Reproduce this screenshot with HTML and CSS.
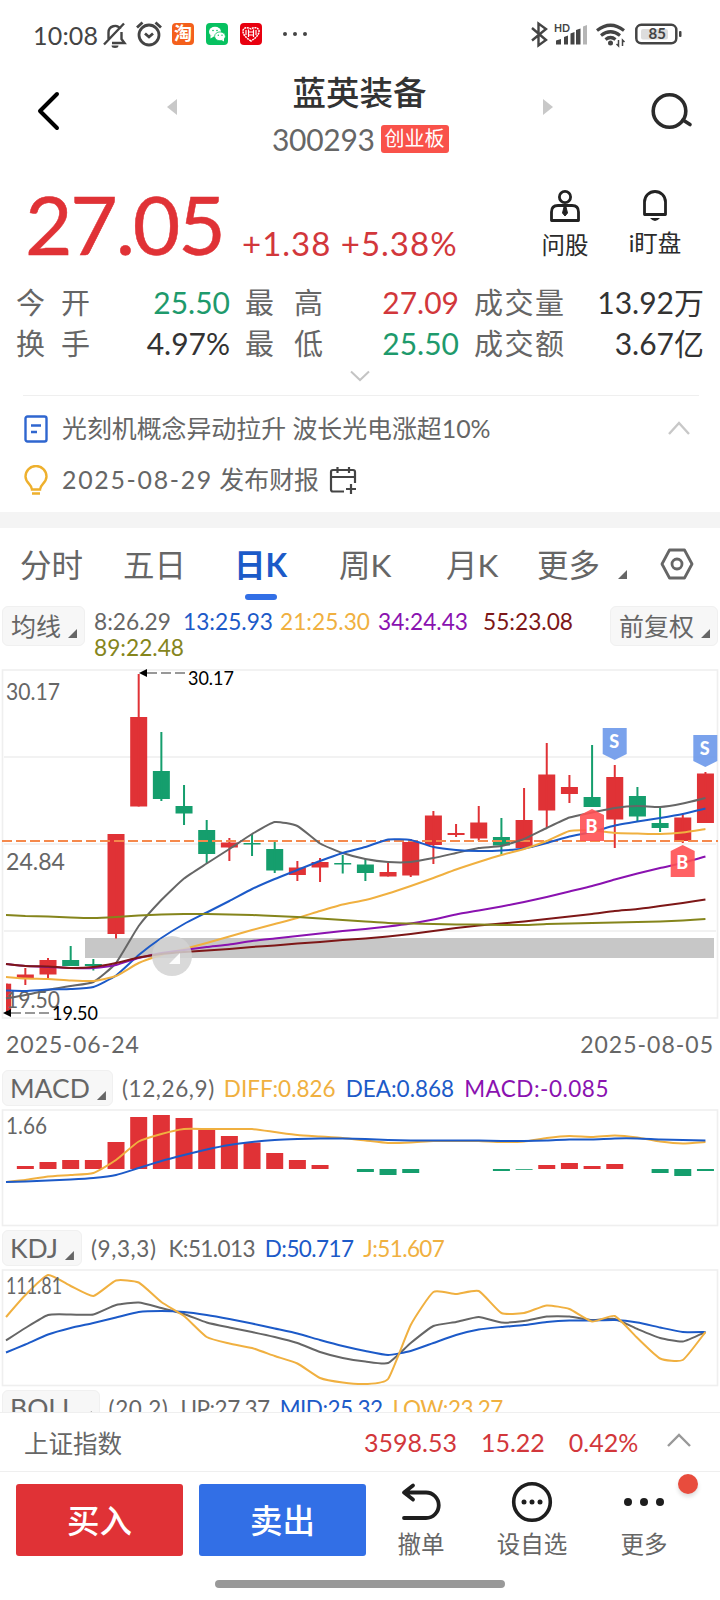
FILE: index.html
```
<!DOCTYPE html>
<html lang="zh-CN">
    <head>
        <meta charset="utf-8">
        <title>蓝英装备 300293</title>
        <link rel="stylesheet" href="styles.css">
    </head>
    <body>
        <div class="status">
            <span class="time">10:08</span>
            <svg class="bell-off" width="24" height="26" viewBox="0 0 24 26" fill="none" stroke="#444" stroke-width="2.4">
                <path d="M5.500 17V10.500a6.500 6.500 0 0 1 12-3.500M18.500 10v7l3 4H9M1 22.500 21 1.500"/>
                <path d="M8.500 23.500h7a3.500 2.500 0 0 1-7 0z" fill="#444" stroke="none"/>
            </svg>
            <svg class="alarm" width="26" height="26" viewBox="0 0 26 26" fill="none" stroke="#444" stroke-width="2.800">
                <circle cx="13" cy="14" r="10"/>
                <path d="M9 12.500l4 3.500 4-3.500M1 6.500 6.500 1.500M25 6.500 19.500 1.500"/>
            </svg>
            <span class="app taobao">淘</span>
            <span class="app wechat">
                <svg width="22" height="22" viewBox="0 0 22 22">
                    <ellipse cx="9" cy="8.800" rx="6" ry="5" fill="#fff"/>
                    <path d="M4.500 12l0 3.500 3.500-2z" fill="#fff"/>
                    <ellipse cx="14" cy="13.300" rx="5.400" ry="4.400" fill="#fff" stroke="#07c160" stroke-width=".8"/>
                    <path d="M15.500 17l2.500 1.500v-3z" fill="#fff"/>
                    <g fill="#07c160"><circle cx="7" cy="7.500" r=".8"/><circle cx="11" cy="7.500" r=".8"/><circle cx="12.300" cy="12.300" r=".7"/><circle cx="16" cy="12.300" r=".7"/></g>
                </svg>
            </span>
            <span class="app huawei">
                <svg width="22" height="22" viewBox="0 0 22 22" fill="none" stroke="#fff" stroke-width="1.500">
                    <path d="M11 18C6 15 2.500 11 3 7.500 4 4 8 4 11 6c3-2 7-2 8 1.500C19.500 11 16 15 11 18z" stroke-dasharray="2 .7"/>
                    <path d="M6 7v5M8.500 6.500v7.500M13.500 6.500v7.500M16 7v5M9 9h4M9 12h4" stroke-width="1.200"/>
                </svg>
            </span>
            <svg class="dots" width="26" height="6" fill="#444"><circle cx="3" cy="3" r="2"/><circle cx="13" cy="3" r="2"/><circle cx="23" cy="3" r="2"/></svg>
            <svg class="signals" width="154" height="28" viewBox="530 20 154 28">
                <path d="M532 28l14 12-7.500 5.500V23.500L546 29l-14 11.500" fill="none" stroke="#444" stroke-width="2.400"/>
                <text x="554" y="31.500" class="hd">HD</text>
                <g fill="#444">
                    <path d="M556 40.500l5-1.500v5.500h-5zM564 37l4-1.500v9h-4zM570.500 33.500l4-1.500v12.500h-4zM576 30l4.500-1.500v16H576z"/>
                    <path d="M583 26.500l4-1.500v19.500h-4z" fill="#b5b5b5"/>
                </g>
                <g fill="none" stroke="#444" stroke-width="3.200">
                    <path d="M597 30.500q13.500-10.500 27 0M601 35.500q9.500-7.500 19 0M605.500 39.500q5-4 10 0"/>
                </g>
                <circle cx="610.500" cy="43" r="2.500" fill="#444"/>
                <path d="M618.500 40v6l-2-2M622.500 46v-6l2 2" fill="none" stroke="#444" stroke-width="1.500"/>
                <rect x="636.300" y="24.800" width="40" height="18.500" rx="5" fill="none" stroke="#444" stroke-width="2.500"/>
                <rect x="641" y="29" width="27" height="10.500" rx="2" fill="#ddd"/>
                <rect x="679" y="31" width="2.500" height="6" rx="1" fill="#444"/>
                <text x="648.500" y="39" class="battery">85</text>
            </svg>
        </div>

        <div class="header">
            <svg class="back" width="24" height="40" fill="none" stroke="#000" stroke-width="4" stroke-linecap="round" stroke-linejoin="round"><path d="M20 3 3 20l17 17"/></svg>
            <svg class="prev" width="10" height="16"><path d="M10 0v16L0 8z" fill="#c8c8c8"/></svg>
            <div class="stock">
                <div class="name">蓝英装备</div>
                <div class="code"><span>300293</span><b>创业板</b></div>
            </div>
            <svg class="next" width="10" height="16"><path d="M0 0v16l10-8z" fill="#c8c8c8"/></svg>
            <svg class="search" width="42" height="38" fill="none" stroke="#2b2b2b" stroke-width="3.600" stroke-linecap="round"><circle cx="18.500" cy="19" r="16.300"/><path d="M32 28l7 4.500"/></svg>
        </div>

        <div class="quote">
            <div class="price">27.05</div>
            <div class="change">+1.38 +5.38%</div>
            <div class="action ask">
                <svg width="32" height="34" fill="none" stroke="#222" stroke-width="2.800">
                    <circle cx="16" cy="8" r="5.600"/>
                    <path d="M2.500 31.500V23q0-6.500 6.500-6.500h14q6.500 0 6.500 6.500v8.500z" stroke-linejoin="round"/>
                    <path d="M15 18h2l1.500 6-2.500 3-2.500-3z" fill="#222" stroke-width="1"/>
                </svg>
                <span>问股</span>
            </div>
            <div class="action watch">
                <svg width="28" height="34" fill="none" stroke="#222" stroke-width="2.800">
                    <path d="M3.500 25.500V13a10.500 10.500 0 0 1 21 0v12.500z" stroke-linejoin="round"/>
                    <path d="M9 29h10q-5 6-10 0z" fill="#222" stroke="none"/>
                </svg>
                <span>i盯盘</span>
            </div>
        </div>
        <div class="stats">
            <span class="label"><i>今</i><i>开</i></span><span class="val green">25.50</span>
            <span class="label"><i>最</i><i>高</i></span><span class="val red">27.09</span>
            <span class="label"><i>成</i><i>交</i><i>量</i></span><span class="val">13.92万</span>
            <span class="label"><i>换</i><i>手</i></span><span class="val">4.97%</span>
            <span class="label"><i>最</i><i>低</i></span><span class="val green">25.50</span>
            <span class="label"><i>成</i><i>交</i><i>额</i></span><span class="val">3.67亿</span>
        </div>
        <div class="expand"><svg width="20" height="12" fill="none" stroke="#c4c4c4" stroke-width="2"><path d="M1 1.500l9 8.500 9-8.500"/></svg></div>

        <div class="news">
            <div class="row">
                <svg width="24" height="28" fill="none" stroke="#2f66cf" stroke-width="2.400"><rect x="1.500" y="1.500" width="21" height="25" rx="2"/><path d="M7 10.500h10M7 17h6"/></svg>
                <span>光刻机概念异动拉升 波长光电涨超10%</span>
                <svg class="up" width="22" height="14" fill="none" stroke="#c8c8c8" stroke-width="2.400"><path d="M1 13 11 2l10 11"/></svg>
            </div>
            <div class="row">
                <svg width="24" height="30" fill="none" stroke="#eeb02d" stroke-width="2.400"><path d="M8 24.500c0-5-6.500-6.500-6.500-13a10.500 10.500 0 0 1 21 0c0 6.500-6.500 8-6.500 13zM8 28.500h8"/></svg>
                <span><i class="day">2025-08-29</i> 发布财报</span>
                <svg class="calendar" width="28" height="28" fill="none" stroke="#444" stroke-width="2.200"><path d="M15 25.500H4q-2 0-2-2V6q0-2 2-2h20q2 0 2 2v11M2 11h24M8.500 1v6M20 1v6M22 18v10M17 23h10"/></svg>
            </div>
        </div>

        <div class="tabs">
            <span>分时</span><span>五日</span><span class="active">日K</span><span>周K</span><span>月K</span><span>更多</span>
            <em class="tri"></em>
            <svg width="34" height="32" fill="none" stroke="#666" stroke-width="2.800"><path d="M9.500 2h15L32 16l-7.500 14h-15L2 16z" stroke-linejoin="round"/><circle cx="17" cy="16" r="5"/></svg>
        </div>

        <div class="ma">
            <span class="chip">均线<em class="tri"></em></span>
            <div class="values">
                <span>8:26.29</span><span class="blue">13:25.93</span><span class="yellow">21:25.30</span><span class="purple">34:24.43</span><span class="maroon">55:23.08</span>
                <span class="olive">89:22.48</span>
            </div>
            <span class="chip">前复权<em class="tri"></em></span>
        </div>
        <svg id="kline" class="chart" width="720" height="351" viewBox="0 669 720 351"></svg>
        <div class="dates"><span>2025-06-24</span><span>2025-08-05</span></div>

        <div class="indicator macd">
            <span class="chip">MACD<em class="tri"></em></span>
            <span class="param">(12,26,9)</span><span class="yellow">DIFF:0.826</span><span class="blue">DEA:0.868</span><span class="purple">MACD:-0.085</span>
        </div>
        <svg id="macd" class="chart" width="720" height="118" viewBox="0 1109 720 118"></svg>
        <div class="indicator kdj">
            <span class="chip">KDJ<em class="tri"></em></span>
            <span class="param">(9,3,3)</span><span>K:51.013</span><span class="blue">D:50.717</span><span class="yellow">J:51.607</span>
        </div>
        <svg id="kdj" class="chart" width="720" height="118" viewBox="0 1269 720 118"></svg>
        <div class="indicator boll">
            <span class="chip">BOLL<em class="tri"></em></span>
            <span class="param">(20,2)</span><span>UP:27.37</span><span class="blue">MID:25.32</span><span class="yellow">LOW:23.27</span>
        </div>

        <div class="index">
            <span class="index-name">上证指数</span>
            <span class="red">3598.53</span><span class="red">15.22</span><span class="red">0.42%</span>
            <svg width="24" height="14" fill="none" stroke="#999" stroke-width="2.400"><path d="M1 13 12 2l11 11"/></svg>
        </div>
        <div class="toolbar">
            <div class="button buy">买入</div>
            <div class="button sell">卖出</div>
            <div class="tool">
                <svg width="42" height="42" fill="none" stroke="#1e1e1e" stroke-width="3.800" stroke-linecap="round" stroke-linejoin="round"><path d="M13 4.500 4 11.500l9 7M5 11.500h21a12.500 12.500 0 0 1 0 25.500H4"/></svg>
                <span>撤单</span>
            </div>
            <div class="tool">
                <svg width="42" height="42"><circle cx="21" cy="21" r="18.300" fill="none" stroke="#1e1e1e" stroke-width="3.600"/><g fill="#1e1e1e"><circle cx="13" cy="21" r="2.500"/><circle cx="21" cy="21" r="2.500"/><circle cx="29" cy="21" r="2.500"/></g></svg>
                <span>设自选</span>
            </div>
            <div class="tool">
                <svg width="42" height="42" fill="#1e1e1e"><circle cx="5" cy="21" r="4"/><circle cx="21" cy="21" r="4"/><circle cx="37" cy="21" r="4"/></svg>
                <span>更多</span>
                <em class="badge"></em>
            </div>
        </div>
        <div class="home"></div>
        <script src="chart.js"></script>
    </body>
</html>
```
FILE: chart.js
```
var RED = "#e03236", GREEN = "#159e6d", GREY = "#666", BLUE = "#1c5ac8",
    YELLOW = "#f0b040", PURPLE = "#8a12b0", MAROON = "#7d1717", OLIVE = "#85851c";
var NS = "http://www.w3.org/2000/svg";

// one column per trading day
var dayX = function(i) {
    return 2.67 + 22.67 * i;
};

var add = function(svg, tag, attrs, text) {
    var el = document.createElementNS(NS, tag);
    for (var k in attrs) {
        el.setAttribute(k, attrs[k]);
    }
    if (text) {
        el.textContent = text;
    }
    svg.appendChild(el);
};
var rect = function(svg, x, y, w, h, fill) {
    add(svg, "rect", {x: x, y: y, width: w, height: h, fill: fill});
};
var frame = function(svg, top, bottom) {
    add(svg, "rect", {x: 2.5, y: top, width: 715, height: bottom - top, fill: "none", stroke: "#efefef", "stroke-width": 1.6});
};
var label = function(svg, x, y, w, size, fill, text) {
    add(svg, "text", {x: x, y: y, textLength: w, lengthAdjust: "spacingAndGlyphs", "font-size": size, fill: fill}, text);
};
var line = function(svg, ys, color) {
    var pts = ys.map(function(y, i) {
        return [Math.max(6, dayX(i)), y];
    });
    var d = "M" + pts[0];
    for (var i = 1; i < pts.length; i++) {
        var a = pts[i - 1], b = pts[i];
        var p = pts[i - 2] || a, n = pts[i + 1] || b;
        d += "C" + [a[0] + (b[0] - p[0]) / 12, a[1] + (b[1] - p[1]) / 12,
            b[0] - (n[0] - a[0]) / 12, b[1] - (n[1] - a[1]) / 12, b[0], b[1]];
    }
    add(svg, "path", {d: d, fill: "none", stroke: color, "stroke-width": 2});
};

var kline = document.getElementById("kline");
frame(kline, 670, 1018);
[757, 844, 931].forEach(function(y) {
    rect(kline, 4, y - 0.8, 712, 1.6, "#efefef");
});
rect(kline, 85, 938, 629, 20, "#c7c7c7");

// [up, body top, body bottom, high, low]
var candles = [
    [1, 983.7, 1010, 983.7, 1013], [1, 974.5, 978.5, 968, 985], [1, 960, 974.5, 958, 978],
    [0, 960, 966, 946, 966], [0, 964, 966, 959, 970.5], [1, 834, 934, 834, 938.5],
    [1, 717, 806.5, 674, 806.5], [0, 771, 799, 732, 801], [0, 806, 813.5, 785, 825],
    [0, 830, 854, 820, 863], [1, 842.5, 847.5, 838, 861], [0, 843, 844.5, 834, 856],
    [0, 849, 870.5, 841, 873], [1, 867.5, 875, 861, 881], [1, 862, 867.5, 858, 882],
    [0, 863, 864.5, 855, 873.5], [0, 864.5, 873, 859, 881], [1, 872, 876.5, 863, 876.5],
    [1, 842, 875.5, 839, 877], [1, 815.5, 845, 811, 864], [1, 833, 835, 824, 837],
    [1, 822.5, 838.5, 806, 841], [0, 837, 845.5, 818, 855], [1, 820, 848, 788, 848],
    [1, 774.5, 810.5, 743, 828], [1, 787, 794, 775, 803], [0, 797, 807, 745, 807],
    [1, 777, 819.5, 765, 848], [0, 796, 816.5, 787, 822], [0, 823, 828, 808, 832],
    [1, 817.5, 841, 814, 843], [1, 773.5, 823, 772, 823]
];
candles.forEach(function(c, i) {
    var x = dayX(i), color = c[0] ? RED : GREEN;
    var left = Math.max(6, x - 8.5);
    rect(kline, left, c[1], x + 8.5 - left, c[2] - c[1], color);
    rect(kline, Math.max(6, x - 1), c[3], 2, c[4] - c[3], color);
});
add(kline, "path", {d: "M2 841H718", stroke: "#f5894c", "stroke-width": 2, "stroke-dasharray": "10 4"});

label(kline, 6, 700, 54, 22.5, GREY, "30.17");
label(kline, 6, 870, 59, 22.5, GREY, "24.84");
label(kline, 6, 1008, 54, 22.5, GREY, "19.50");

line(kline, [998.5, 995, 990, 986, 982, 963, 926, 900, 878.5, 863.5, 849, 834, 822, 826, 843.5, 853, 859, 862, 862, 858, 853, 848, 846, 839, 828, 817.5, 812.5, 808, 806, 807, 803.5, 798], GREY);
line(kline, [990.5, 991, 989.5, 989, 987, 975.5, 955, 938, 924, 912.5, 901, 889, 879, 870, 861, 853, 847, 839.5, 840, 847, 850, 851, 850.5, 848.5, 843, 836.5, 832, 825.5, 821.5, 818, 814, 808.5], BLUE);
line(kline, [977, 978.5, 979, 980.5, 981, 976, 963, 955, 949, 943, 936.5, 930, 924, 918, 911, 904.5, 900, 893.5, 886, 878, 869.5, 862, 855, 849, 841, 831, 830.5, 833, 833.5, 834, 832.5, 829], YELLOW);
line(kline, [964, 966, 967, 968, 968, 965, 958, 953, 950, 947, 944.5, 941, 938.5, 936, 933.5, 931, 929, 926.5, 923.5, 919.5, 914.5, 910.5, 906.5, 902, 897, 891.5, 886, 879.5, 873.5, 868, 863, 856.5], PURPLE);
line(kline, [964, 966, 966.5, 968, 967, 963, 957.5, 954, 952, 950.5, 949, 947, 945.5, 943.5, 942, 940, 938.5, 936.5, 934, 931, 928, 925.5, 923.5, 921.5, 919, 916.5, 914, 911, 909, 906, 903, 899.5], MAROON);
line(kline, [915, 916, 916.5, 917.5, 918, 917, 915.5, 914.5, 914, 914, 914.5, 915, 916, 917, 918.5, 920, 921.5, 923, 923.5, 924, 924.5, 924.5, 925, 925, 924, 923.5, 923, 922.5, 922, 921.5, 920.5, 919], OLIVE);

// drag handle
add(kline, "circle", {cx: 172, cy: 956, r: 20, fill: "#d2d2d2", "fill-opacity": 0.85});
add(kline, "path", {d: "M180 953v11h-11z", fill: "#fff", "fill-opacity": 0.9});

// high / low pointers
[[139, 673, 188, 685, "30.17"], [3, 1013, 52, 1020, "19.50"]].forEach(function(p) {
    add(kline, "path", {d: "M" + p[0] + " " + p[1] + "l8-4v8z", fill: "#000"});
    add(kline, "path", {d: "M" + (p[0] + 8) + " " + p[1] + "h38", stroke: "#777", "stroke-width": 1.6, "stroke-dasharray": "10 4"});
    label(kline, p[2], p[3], 46, 20, "#000", p[4]);
});

// trade marks
[["S", 614.7, 728], ["S", 705.3, 735], ["B", 592, 809], ["B", 682.7, 845]].forEach(function(m) {
    var sell = m[0] === "S";
    var shape = sell ? "h24v26l-12 6-12-6z" : "m0 6l12-6 12 6v26h-24z";
    add(kline, "path", {d: "M" + (m[1] - 12) + " " + m[2] + shape, fill: sell ? "#6b98ea" : "#ff5053", "fill-opacity": 0.9});
    add(kline, "text", {x: m[1] - 0.5, y: m[2] + (sell ? 20 : 24), "text-anchor": "middle", "font-size": 18, "font-weight": 900, fill: "#fff"}, m[0]);
});

var macd = document.getElementById("macd");
frame(macd, 1110, 1225.5);
[0, 1166, 1162, 1160, 1160, 1142, 1117, 1115, 1118, 1130, 1136, 1142.5, 1153, 1160, 1165, 0, 1172, 1175, 1173, 0, 0, 0, 1171, 1169.8, 1165, 1163, 1166, 1164, 0, 1173, 1176, 1171].forEach(function(y, i) {
    if (y) {
        rect(macd, dayX(i) - 8.5, Math.min(y, 1169), 17, Math.abs(1169 - y), y < 1169 ? RED : GREEN);
    }
});
label(macd, 6, 1134, 41, 22.5, GREY, "1.66");
line(macd, [1182, 1180, 1176.5, 1175, 1173, 1160, 1141.5, 1134, 1129, 1129, 1129, 1129, 1132, 1135, 1136.5, 1138, 1140.5, 1143, 1142.5, 1141, 1141, 1141, 1142, 1141.5, 1138, 1136, 1137, 1135.5, 1137.5, 1141.5, 1143.5, 1142], YELLOW);
line(macd, [1182, 1181.5, 1180.5, 1179.5, 1178, 1175, 1168, 1161, 1155, 1149.5, 1145, 1142, 1140, 1139, 1138.5, 1138.5, 1139, 1140, 1140.5, 1140.5, 1140.5, 1140.5, 1141, 1141, 1140.5, 1139.5, 1139.5, 1138.5, 1138.5, 1139.5, 1140, 1140.5], BLUE);

var kdj = document.getElementById("kdj");
frame(kdj, 1270, 1385.5);
line(kdj, [1340.5, 1328, 1315, 1314.5, 1314.5, 1305, 1302.5, 1308, 1314, 1322.5, 1327.5, 1332, 1337, 1343, 1352, 1358, 1361.5, 1363, 1343, 1326, 1322, 1317, 1322.5, 1321, 1316.5, 1316.5, 1320, 1319, 1329, 1338, 1341.5, 1332], GREY);
line(kdj, [1352.5, 1344.5, 1334.5, 1328, 1323, 1317.5, 1312, 1311, 1312, 1315, 1319, 1323.5, 1328.5, 1333.5, 1340, 1346, 1351, 1355, 1351, 1343, 1335, 1329.5, 1327, 1325, 1322, 1320.5, 1320.5, 1320, 1322.5, 1327.5, 1332, 1332], BLUE);
line(kdj, [1317, 1295, 1275, 1286, 1296, 1280.5, 1282.5, 1302, 1316, 1337, 1343.5, 1348, 1356, 1363.5, 1378, 1382.5, 1384, 1379, 1325, 1292, 1294, 1291, 1313, 1313, 1305.5, 1309, 1321.5, 1316, 1338, 1358.5, 1360, 1332], YELLOW);
label(kdj, 6, 1294, 56, 22.5, GREY, "111.81");
```
FILE: styles.css
```
* {
    box-sizing: border-box;
}

body {
    margin: 0;
    width: 720px;
    height: 1600px;
    overflow: hidden;
    background: #fff;
    color: #666;
    font-family: Lato, "Noto Sans CJK SC", sans-serif;
}

svg {
    display: block;
    flex: none;
}

i, em {
    font-style: normal;
}

.red { color: #d2373b !important; }
.green { color: #1e9a6c !important; }
.blue { color: #1c5ac8; }
.yellow { color: #f0b040; }
.purple { color: #8a12b0; }
.maroon { color: #7d1717; }
.olive { color: #85851c; }

/* status bar */
.status {
    display: flex;
    align-items: center;
    height: 68px;
    padding-left: 33px;
    color: #444;
}

.time {
    width: 70px;
    padding-top: 1px;
    font-size: 25px;
    letter-spacing: 0.2px;
}

.bell-off { margin-top: 2px; }
.alarm { margin-left: 9px; }

.app {
    width: 22px;
    height: 22px;
    border-radius: 4px;
    overflow: hidden;
}

.taobao {
    margin-left: 10px;
    background: #f4601c;
    color: #fff;
    font-size: 18px;
    font-weight: 700;
    line-height: 20px;
    text-align: center;
}

.wechat {
    margin-left: 12px;
    background: #07c160;
}

.huawei {
    margin-left: 12px;
    background: #e8000f;
}

.dots { margin-left: 20px; }
.signals { margin-left: 222px; }

.hd {
    font-size: 10.5px;
    font-weight: 700;
    fill: #444;
}

.battery {
    font-size: 15px;
    font-weight: 700;
    fill: #444;
}

/* header */
.header {
    display: flex;
    height: 102px;
    padding-left: 37px;
}

.back { margin-top: 23px; }
.prev { margin: 31px 0 0 106px; }

.stock {
    width: 178px;
    margin-left: 95px;
}

.name {
    height: 50px;
    padding-right: 3px;
    line-height: 48px;
    font-size: 33.5px;
    font-weight: 500;
    color: #333;
    text-align: center;
    white-space: nowrap;
}

.code {
    display: flex;
    align-items: center;
    height: 42px;
    font-size: 30px;
    letter-spacing: -0.3px;
}

.code b {
    width: 68px;
    height: 28px;
    margin-left: 6px;
    border-radius: 3px;
    background: #f9524a;
    color: #fff;
    font-size: 20px;
    font-weight: 400;
    line-height: 27px;
    letter-spacing: 0;
    text-align: center;
}

.next { margin: 31px 0 0 93px; }
.search { margin: 24px 0 0 98px; }

/* quote */
.quote {
    display: flex;
    height: 106px;
    padding-left: 25px;
}

.price {
    width: 217px;
    font-size: 82px;
    line-height: 106px;
    letter-spacing: -2.2px;
    color: #e03236;
    -webkit-text-stroke: 0.5px #e03236;
}

.change {
    width: 292px;
    padding-top: 52px;
    font-size: 33px;
    line-height: 42px;
    letter-spacing: 1px;
    color: #d2373b;
    white-space: nowrap;
}

.action {
    display: flex;
    flex-direction: column;
    align-items: center;
    width: 62px;
    padding-top: 19px;
    font-size: 23.5px;
    line-height: 45px;
    color: #2b2b2b;
    white-space: nowrap;
}

.watch {
    margin-left: 28px;
    line-height: 41px;
}

.stats {
    display: grid;
    grid-template-columns: 74px 140px 78px 136px 90px 138px;
    grid-auto-rows: 41px;
    align-items: center;
    padding: 6px 0 0 16px;
}

.label {
    display: flex;
    justify-content: space-between;
    font-size: 29px;
    line-height: 41px;
}

.label:nth-child(6n+3) { margin-left: 15px; margin-right: -15px; }
.label:nth-child(6n+5) { margin-left: 30px; margin-right: -30px; }

.val {
    font-size: 30px;
    line-height: 41px;
    color: #333;
    text-align: right;
    white-space: nowrap;
}

.val:nth-child(6n+4) { margin-right: -15px; }
.val:nth-child(6n+6) { margin-right: -32px; }

.expand {
    display: flex;
    justify-content: center;
    height: 31px;
    padding-top: 6px;
}

/* news */
.news {
    height: 117px;
    margin: 0 21px 0 23px;
    padding-top: 7px;
    border-top: 1px solid #efefef;
}

.row {
    display: flex;
    align-items: center;
    height: 51px;
    font-size: 24.9px;
    line-height: 36px;
    padding-left: 1px;
    white-space: nowrap;
}

.row span {
    margin: -2px 0 0 14px;
}

.row .day { letter-spacing: 1.7px; }
.up { margin: -2px 9px 0 auto; }
.calendar { margin-left: 10px; }

/* period tabs */
.tabs {
    display: grid;
    grid-template-columns: 103px 111px 105px 107px 91px 81px 42px 34px;
    align-items: center;
    height: 94px;
    padding: 6px 0 15px 20px;
    border-top: 16px solid #f4f4f4;
    font-size: 31.5px;
    white-space: nowrap;
}

.tabs svg { margin-top: 2px; }

.tabs .active {
    position: relative;
    color: #1c5ac8;
    font-weight: 700;
}

.tabs .active::after {
    content: "";
    position: absolute;
    left: 11px;
    bottom: -14px;
    width: 32px;
    height: 6px;
    border-radius: 3px;
    background: #326fe6;
}

.tri {
    display: inline-block;
    width: 9px;
    height: 9px;
    background: #666;
    clip-path: polygon(100% 0, 100% 100%, 0 100%);
}

.tabs .tri { margin-top: 24px; }

/* indicator rows */
.ma {
    display: flex;
    align-items: flex-start;
    height: 63px;
    padding: 0 2px;
}

.chip {
    display: flex;
    align-items: center;
    flex: none;
    height: 40px;
    padding: 0 7px 0 8px;
    border: 1px solid #f0f0f0;
    border-radius: 6px;
    background: #f7f7f7;
    font-size: 25px;
    line-height: 40px;
}

.chip .tri { margin: 15px 0 0 7px; }

.values {
    display: grid;
    grid-template-columns: 89px 97px 98px 105px 127px;
    grid-auto-rows: 26px;
    margin: 3px 0 0 9px;
    font-size: 22.7px;
    line-height: 26px;
}

.chart {
    overflow: visible;
}

.dates {
    display: flex;
    justify-content: space-between;
    height: 50px;
    padding: 6px 6px 0 6px;
    font-size: 23px;
    line-height: 36px;
    letter-spacing: 1px;
}

.indicator {
    display: flex;
    height: 39px;
    padding-left: 2px;
    font-size: 22.5px;
    line-height: 37px;
    white-space: nowrap;
}

.indicator .chip {
    height: 36px;
    padding: 0 6px 0 7px;
    margin-right: 9px;
    font-size: 26.5px;
    letter-spacing: 0;
    line-height: 38px;
}

.indicator > span { margin-right: 10px; }
.indicator .param { letter-spacing: 0.6px; }

.macd .yellow { margin-left: -1px; }
.macd .purple { letter-spacing: 0.5px; }

.kdj {
    height: 42px;
    padding-top: 3px;
    letter-spacing: -0.6px;
}

.kdj .chip { padding-right: 7px; }
.kdj .param { margin-right: 12px; }

.boll {
    height: 25px;
    padding-top: 3px;
    overflow: hidden;
    letter-spacing: -0.5px;
}

.boll .param { margin-right: 12px; }
.boll .chip { padding-right: 7px; }

/* index line */
.index {
    display: flex;
    align-items: center;
    height: 60px;
    padding-left: 24px;
    border-top: 1px solid #efefef;
    border-bottom: 1px solid #efefef;
    font-size: 25px;
}

.index-name {
    width: 340px;
    font-size: 24.5px;
}

.index .red {
    margin-right: 24px;
}

.index svg { margin: -4px 0 0 5px; }

/* toolbar */
.toolbar {
    display: flex;
    height: 108px;
    padding: 12px 0 0 16px;
}

.button {
    width: 167px;
    height: 72px;
    margin-right: 16px;
    border-radius: 3px;
    color: #fff;
    font-size: 32.5px;
    font-weight: 500;
    line-height: 73px;
    text-align: center;
}

.buy { background: #e03236; }
.sell { background: #326fe6; }

.tool {
    position: relative;
    display: flex;
    flex-direction: column;
    align-items: center;
    width: 112px;
    margin-top: -3px;
    font-size: 23.5px;
    line-height: 42px;
}

.tool:nth-child(3) {
    width: 78px;
    margin-right: 16px;
}

.badge {
    position: absolute;
    top: -7px;
    right: 2px;
    width: 20px;
    height: 20px;
    border-radius: 50%;
    background: #e84c3d;
    box-shadow: 0 3px 4px #ddd;
}

.home {
    width: 290px;
    height: 8px;
    margin: 0 auto;
    border-radius: 4px;
    background: #999;
}
```
